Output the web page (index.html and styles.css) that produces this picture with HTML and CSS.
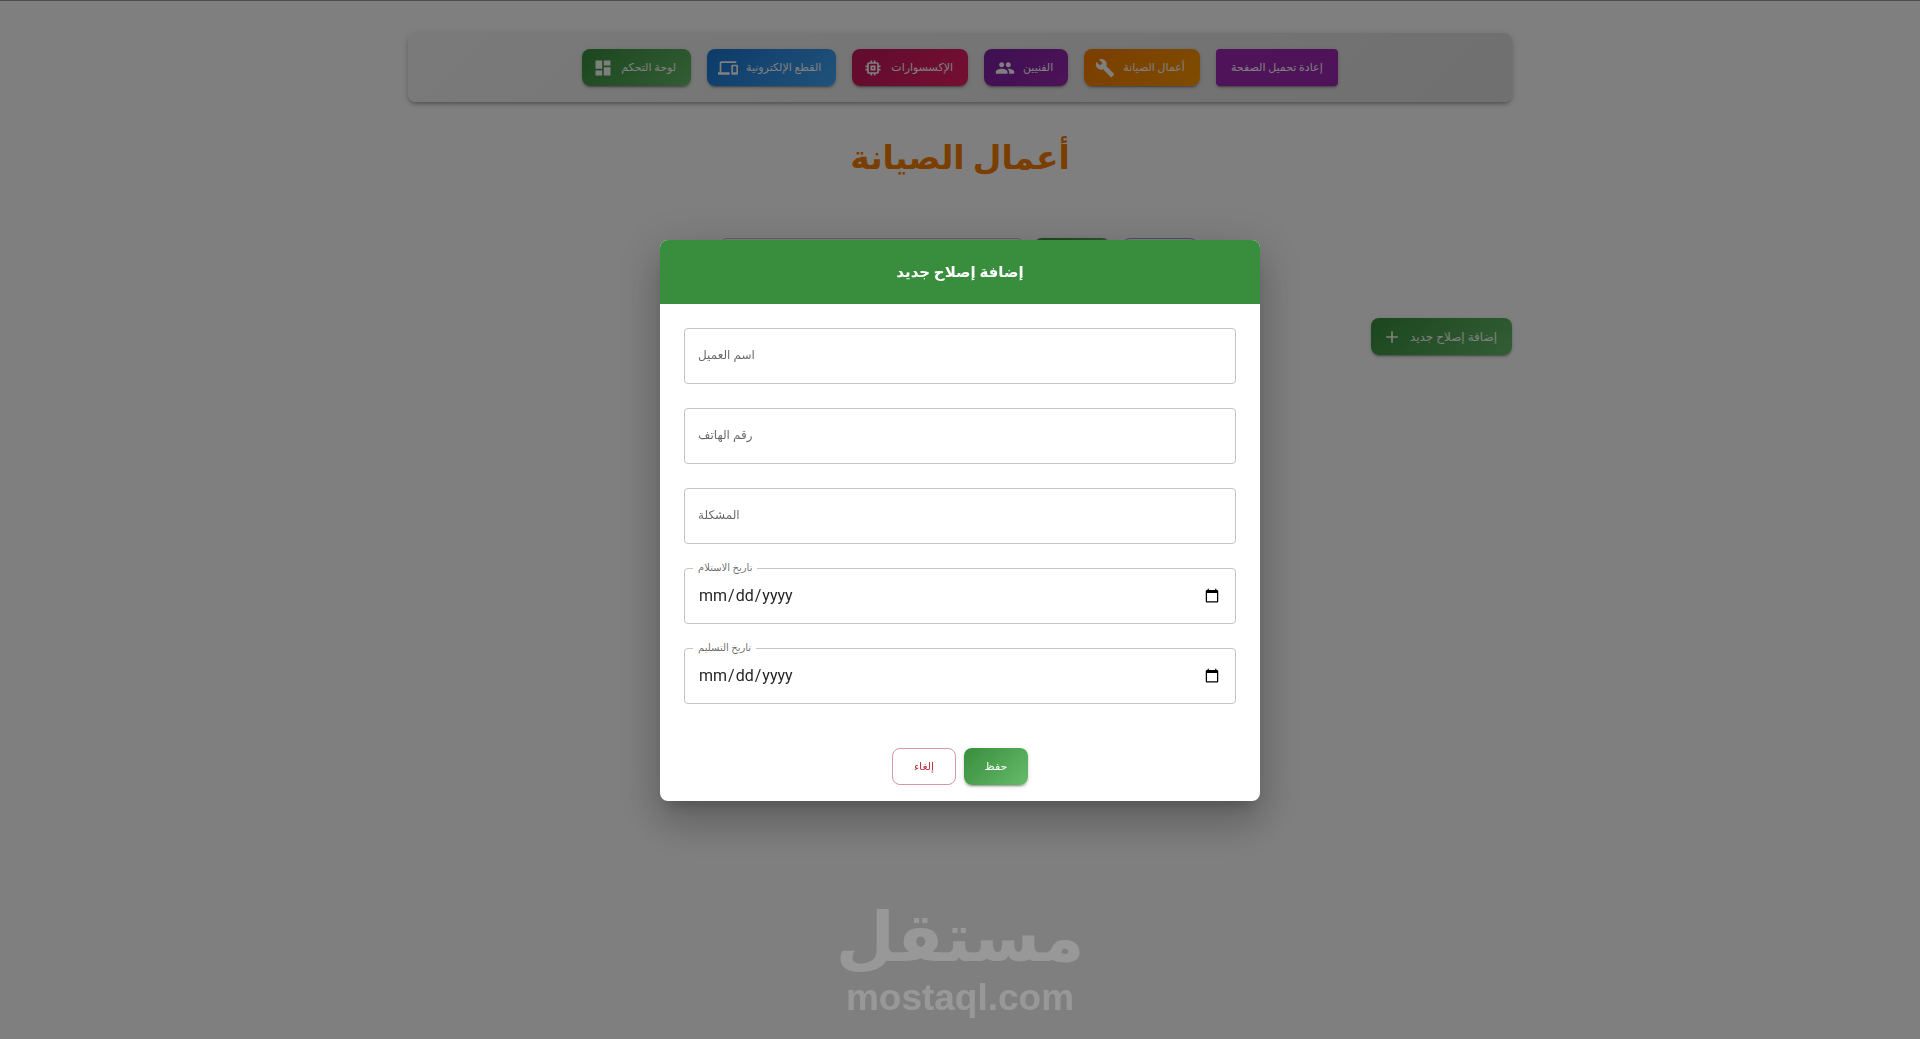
FILE: index.html
```html
<!DOCTYPE html>
<html lang="ar">
  <head>
    <meta charset="UTF-8" />
    <meta name="viewport" content="width=device-width, initial-scale=1.0" />
    <title>أعمال الصيانة</title>
    <link rel="stylesheet" href="styles.css">
  </head>
  <body>
    <div class="container">
      <nav class="toolbar">
        <button class="btn green">
          <svg class="icon" viewBox="0 0 24 24"><path d="M3 13h8V3H3v10zm0 8h8v-6H3v6zm10 0h8V11h-8v10zm0-18v6h8V3h-8z" /></svg>
          <span>لوحة التحكم</span>
        </button>
        <button class="btn blue">
          <svg class="icon" viewBox="0 0 24 24"><path d="M4 6h18V4H4c-1.100 0-2 .9-2 2v11H0v3h14v-3H4V6zm19 2h-6c-.55 0-1 .45-1 1v10c0 .55.45 1 1 1h6c.55 0 1-.45 1-1V9c0-.55-.45-1-1-1zm-1 9h-4v-7h4v7z" /></svg>
          <span>القطع الإلكترونية</span>
        </button>
        <button class="btn pink">
          <svg class="icon" viewBox="0 0 24 24"><path d="M15 9H9v6h6V9zm-2 4h-2v-2h2v2zm8-2V9h-2V7c0-1.100-.9-2-2-2h-2V3h-2v2h-2V3H9v2H7c-1.100 0-2 .9-2 2v2H3v2h2v2H3v2h2v2c0 1.100.9 2 2 2h2v2h2v-2h2v2h2v-2h2c1.100 0 2-.9 2-2v-2h2v-2h-2v-2h2zm-4 6H7V7h10v10z" /></svg>
          <span>الإكسسوارات</span>
        </button>
        <button class="btn purple">
          <svg class="icon" viewBox="0 0 24 24"><path d="M16 11c1.660 0 2.990-1.340 2.990-3S17.660 5 16 5s-3 1.340-3 3 1.340 3 3 3zm-8 0c1.660 0 2.990-1.340 2.990-3S9.660 5 8 5 5 6.340 5 8s1.340 3 3 3zm0 2c-2.330 0-7 1.170-7 3.500V19h14v-2.500c0-2.330-4.670-3.500-7-3.500zm8 0c-.29 0-.62.020-.97.050 1.160.84 1.970 1.970 1.970 3.450V19h6v-2.500c0-2.330-4.670-3.500-7-3.500z" /></svg>
          <span>الفنيين</span>
        </button>
        <button class="btn orange">
          <svg class="icon" viewBox="0 0 24 24"><path d="M22.700 19l-9.100-9.100c.9-2.300.4-5-1.500-6.900-2-2-5-2.400-7.400-1.300L9 6 6 9 1.600 4.700C.4 7.100.9 10.100 2.900 12.100c1.900 1.900 4.600 2.400 6.900 1.500l9.100 9.100c.4.4 1 .4 1.400 0l2.300-2.300c.5-.4.5-1.100.1-1.400z" /></svg>
          <span>أعمال الصيانة</span>
        </button>
        <button class="btn reload" onclick="location.reload()">إعادة تحميل الصفحة</button>
      </nav>

      <h1 class="page-title">أعمال الصيانة</h1>

      <div class="search">
        <input class="search-input" type="text" />
        <button class="btn green search-btn"></button>
        <button class="btn clear-btn"></button>
      </div>

      <div class="actions">
        <button class="btn green add-btn">
          <svg class="icon" viewBox="0 0 24 24"><path d="M19 13h-6v6h-2v-6H5v-2h6V5h2v6h6v2z" /></svg>
          <span>إضافة إصلاح جديد</span>
        </button>
      </div>
    </div>

    <!-- نافذة الإضافة -->
    <div class="backdrop">
      <form class="dialog" role="dialog" aria-labelledby="dialog-title">
        <h2 class="dialog-title" id="dialog-title">إضافة إصلاح جديد</h2>
        <div class="dialog-content">
          <div class="field">
            <input type="text" id="customer" />
            <label for="customer">اسم العميل</label>
          </div>
          <div class="field">
            <input type="text" id="phone" />
            <label for="phone">رقم الهاتف</label>
          </div>
          <div class="field">
            <input type="text" id="issue" />
            <label for="issue">المشكلة</label>
          </div>
          <div class="field date">
            <input type="date" id="received" />
            <label for="received">تاريخ الاستلام</label>
          </div>
          <div class="field date">
            <input type="date" id="delivered" />
            <label for="delivered">تاريخ التسليم</label>
          </div>
        </div>
        <div class="dialog-actions">
          <button type="button" class="btn cancel">إلغاء</button>
          <button type="submit" class="btn green">حفظ</button>
        </div>
      </form>
    </div>

    <div class="watermark">
      <div class="watermark-name">مستقل</div>
      <div class="watermark-site">mostaql.com</div>
    </div>
  </body>
</html>
```
FILE: styles.css
```css
* {
  box-sizing: border-box;
}
body {
  margin: 0;
  min-height: 100vh;
  border-top: 1px solid #999;
  background-color: #fff;
  font-family: Roboto, "DejaVu Sans", sans-serif;
  color: rgba(0, 0, 0, 0.87);
}
.container {
  max-width: 1152px;
  margin: 0 auto;
  padding: 32px 24px;
}
.toolbar {
  display: flex;
  justify-content: center;
  gap: 16px;
  padding: 16px;
  border-radius: 8px;
  background: linear-gradient(135deg, #f5f5f5, #e0e0e0);
  box-shadow: 0 3px 3px -2px rgba(0, 0, 0, 0.2), 0 3px 4px rgba(0, 0, 0, 0.14),
    0 1px 8px rgba(0, 0, 0, 0.12);
}

/* buttons */
.btn {
  display: inline-flex;
  align-items: center;
  justify-content: center;
  gap: 8px;
  min-width: 64px;
  height: 37px;
  padding: 0 15px;
  border: 0;
  border-radius: 8px;
  color: #fff;
  font-family: inherit;
  font-size: 11px;
  font-weight: 400;
  white-space: nowrap;
  cursor: pointer;
  box-shadow: 0 3px 1px -2px rgba(0, 0, 0, 0.2), 0 2px 2px rgba(0, 0, 0, 0.14),
    0 1px 5px rgba(0, 0, 0, 0.12);
}
.icon {
  width: 20px;
  height: 20px;
  margin-left: -4px;
  fill: currentColor;
  flex-shrink: 0;
}
.green {
  background: linear-gradient(135deg, #388e3c, #66bb6a);
}
.blue {
  background: linear-gradient(135deg, #1976d2, #42a5f5);
}
.pink {
  background: linear-gradient(135deg, #c2185b, #e91e63);
}
.purple {
  background: linear-gradient(135deg, #7b1fa2, #9c27b0);
}
.orange {
  background: linear-gradient(135deg, #f57c00, #ff9800);
}
.reload {
  border-radius: 4px;
  background-color: #9c27b0;
}

.page-title {
  margin: 28px 0 52px;
  color: #f57c00;
  font-size: 33px;
  line-height: 56px;
  text-align: center;
}

/* search row */
.search {
  display: flex;
  justify-content: center;
  gap: 12px;
  margin-bottom: 40px;
}
.search-input {
  width: 300px;
  height: 40px;
  border: 1px solid #c4c4c4;
  border-radius: 4px;
}
.search-btn,
.clear-btn {
  width: 76px;
  height: 40px;
}
.clear-btn {
  border: 1px solid #90a4d4;
  background: none;
  box-shadow: none;
}
.actions {
  display: flex;
  justify-content: flex-end;
}
.add-btn {
  font-size: 12px;
}

/* dialog */
.backdrop {
  position: fixed;
  inset: 0;
  display: flex;
  align-items: center;
  justify-content: center;
  padding-top: 1px;
  background-color: rgba(0, 0, 0, 0.5);
}
.dialog {
  width: 600px;
  border-radius: 8px;
  overflow: hidden;
  background-color: #fff;
  box-shadow: 0 11px 15px -7px rgba(0, 0, 0, 0.2),
    0 24px 38px 3px rgba(0, 0, 0, 0.14), 0 9px 46px 8px rgba(0, 0, 0, 0.12);
}
.dialog-title {
  margin: 0;
  padding: 16px 24px;
  background-color: #388e3c;
  color: #fff;
  font-size: 15px;
  line-height: 32px;
  text-align: center;
}
.dialog-content {
  display: flex;
  flex-direction: column;
  gap: 24px;
  padding: 24px 24px 36px;
}
.field {
  position: relative;
}
.field input {
  display: block;
  width: 100%;
  height: 56px;
  padding: 16px 13px;
  border: 1px solid #c4c4c4;
  border-radius: 4px;
  background: none;
  color: rgba(0, 0, 0, 0.87);
  font-family: inherit;
  font-size: 16px;
}
.field label {
  position: absolute;
  top: 15px;
  left: 14px;
  color: rgba(0, 0, 0, 0.6);
  font-size: 12px;
  line-height: 24px;
  pointer-events: none;
}
.field.date label {
  top: -8px;
  left: 9px;
  padding: 0 5px;
  background-color: #fff;
  font-size: 10px;
  line-height: 16px;
}
.dialog-actions {
  display: flex;
  justify-content: center;
  gap: 8px;
  padding: 8px 16px 16px;
}
.cancel {
  border: 1px solid #d49a9e;
  background: none;
  color: #b9323c;
  box-shadow: none;
}

.watermark {
  position: fixed;
  bottom: 20px;
  left: 0;
  right: 0;
  color: #fff;
  font-weight: 700;
  text-align: center;
  opacity: 0.2;
  pointer-events: none;
}
.watermark-name {
  font-family: "DejaVu Sans", sans-serif;
  font-size: 68px;
  line-height: 78px;
}
.watermark-site {
  font-family: "Liberation Sans", sans-serif;
  font-size: 37px;
  line-height: 42px;
}
```
